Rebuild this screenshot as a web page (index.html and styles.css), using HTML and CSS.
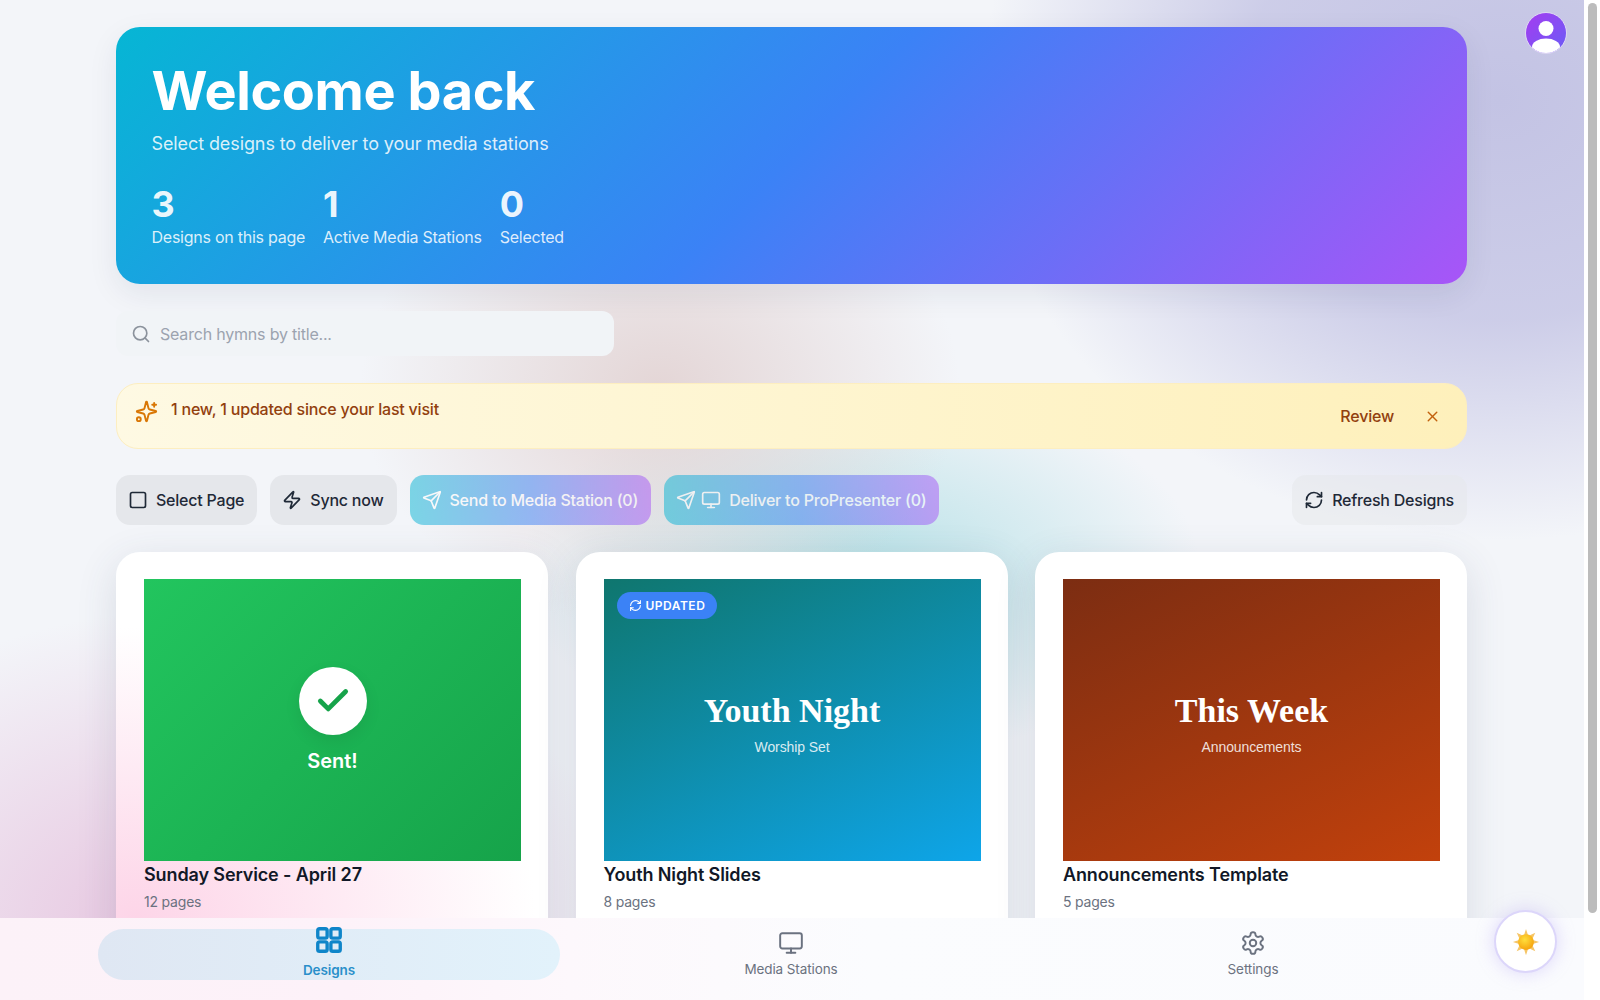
FILE: index.html
```html
<!DOCTYPE html>
<html lang="en">
<head>
    <meta charset="UTF-8">
    <meta name="viewport" content="width=device-width, initial-scale=1.0">
    <title>Designs</title>
    <link rel="stylesheet" href="styles.css">
</head>
<body>
    <main class="page">
        <section class="hero">
            <h1>Welcome back</h1>
            <p class="hero-sub">Select designs to deliver to your media stations</p>
            <div class="stats">
                <div class="stat"><strong>3</strong><span>Designs on this page</span></div>
                <div class="stat"><strong>1</strong><span>Active Media Stations</span></div>
                <div class="stat"><strong>0</strong><span>Selected</span></div>
            </div>
        </section>

        <div class="search">
            <svg class="icon" viewBox="0 0 24 24"><circle cx="11" cy="11" r="8"/><path d="m21 21-4.3-4.3"/></svg>
            <span>Search hymns by title...</span>
        </div>

        <div class="notice">
            <svg class="icon notice-icon" viewBox="0 0 24 24"><path d="M9.9 15.5A2 2 0 0 0 8.5 14.1L2.4 12.5a.5.5 0 0 1 0-1L8.5 9.9A2 2 0 0 0 9.9 8.5l1.6-6.1a.5.5 0 0 1 1 0l1.6 6.1a2 2 0 0 0 1.4 1.4l6.1 1.6a.5.5 0 0 1 0 1l-6.1 1.6a2 2 0 0 0-1.4 1.4l-1.6 6.1a.5.5 0 0 1-1 0z"/><path d="M20 3v4"/><path d="M22 5h-4"/><circle cx="4" cy="20" r="2"/></svg>
            <p>1 new, 1 updated since your last visit</p>
            <span class="notice-review">Review</span>
            <svg class="icon notice-close" viewBox="0 0 24 24"><path d="M18 6 6 18"/><path d="m6 6 12 12"/></svg>
        </div>

        <div class="toolbar">
            <button class="btn">
                <svg class="icon" viewBox="0 0 24 24"><rect x="3" y="3" width="18" height="18" rx="2"/></svg>
                Select Page
            </button>
            <button class="btn">
                <svg class="icon" viewBox="0 0 24 24"><path d="M4 14a1 1 0 0 1-.78-1.63l9.9-10.2a.5.5 0 0 1 .86.46l-1.92 6.02A1 1 0 0 0 13 10h7a1 1 0 0 1 .78 1.63l-9.9 10.2a.5.5 0 0 1-.86-.46l1.92-6.02A1 1 0 0 0 11 14z"/></svg>
                Sync now
            </button>
            <button class="btn btn-send">
                <svg class="icon" viewBox="0 0 24 24"><path d="M14.5 21.7a.5.5 0 0 0 .9 0l6.5-19a.5.5 0 0 0-.6-.6l-19 6.5a.5.5 0 0 0 0 .9l7.9 3.2a2 2 0 0 1 1.1 1.1z"/><path d="m21.9 2.1-10.9 10.9"/></svg>
                Send to Media Station (0)
            </button>
            <button class="btn btn-send">
                <svg class="icon" viewBox="0 0 24 24"><path d="M14.5 21.7a.5.5 0 0 0 .9 0l6.5-19a.5.5 0 0 0-.6-.6l-19 6.5a.5.5 0 0 0 0 .9l7.9 3.2a2 2 0 0 1 1.1 1.1z"/><path d="m21.9 2.1-10.9 10.9"/></svg>
                <svg class="icon btn-monitor" viewBox="0 0 24 24"><rect x="2" y="3" width="20" height="14" rx="2"/><path d="M8 21h8"/><path d="M12 17v4"/></svg>
                Deliver to ProPresenter (0)
            </button>
            <button class="btn btn-refresh">
                <svg class="icon" viewBox="0 0 24 24"><path d="M3 12a9 9 0 0 1 9-9 9.75 9.75 0 0 1 6.74 2.74L21 8"/><path d="M21 3v5h-5"/><path d="M21 12a9 9 0 0 1-9 9 9.75 9.75 0 0 1-6.74-2.74L3 16"/><path d="M8 16H3v5"/></svg>
                Refresh Designs
            </button>
        </div>

        <div class="cards">
            <article class="card card-sent">
                <div class="thumb thumb-sent">
                    <div class="sent-circle">
                        <svg class="icon" viewBox="0 0 24 24"><path d="M20 6 9 17l-5-5"/></svg>
                    </div>
                    <span class="sent-label">Sent!</span>
                </div>
                <h3>Sunday Service - April 27</h3>
                <p class="pages">12 pages</p>
            </article>
            <article class="card">
                <div class="thumb thumb-youth">
                    <span class="badge">
                        <svg class="icon" viewBox="0 0 24 24"><path d="M3 12a9 9 0 0 1 9-9 9.75 9.75 0 0 1 6.74 2.74L21 8"/><path d="M21 3v5h-5"/><path d="M21 12a9 9 0 0 1-9 9 9.75 9.75 0 0 1-6.74-2.74L3 16"/><path d="M8 16H3v5"/></svg>
                        UPDATED
                    </span>
                    <span class="thumb-title">Youth Night</span>
                    <span class="thumb-sub">Worship Set</span>
                </div>
                <h3>Youth Night Slides</h3>
                <p class="pages">8 pages</p>
            </article>
            <article class="card">
                <div class="thumb thumb-week">
                    <span class="thumb-title">This Week</span>
                    <span class="thumb-sub">Announcements</span>
                </div>
                <h3>Announcements Template</h3>
                <p class="pages">5 pages</p>
            </article>
        </div>
    </main>

    <a class="avatar">
        <svg viewBox="0 0 40 40"><circle cx="20" cy="15.5" r="7.5"/><ellipse cx="20" cy="34" rx="14" ry="8.5"/></svg>
    </a>

    <nav class="tabbar">
        <a class="tab active">
            <svg class="icon" viewBox="0 0 24 24"><rect x="3" y="3" width="7.5" height="7.5" rx="1.5"/><rect x="13.5" y="3" width="7.5" height="7.5" rx="1.5"/><rect x="3" y="13.5" width="7.5" height="7.5" rx="1.5"/><rect x="13.5" y="13.5" width="7.5" height="7.5" rx="1.5"/></svg>
            <span>Designs</span>
        </a>
        <a class="tab">
            <svg class="icon" viewBox="0 0 24 24"><rect x="2" y="3" width="20" height="14" rx="2"/><path d="M8 21h8"/><path d="M12 17v4"/></svg>
            <span>Media Stations</span>
        </a>
        <a class="tab">
            <svg class="icon" viewBox="0 0 24 24"><path d="M12.22 2h-.44a2 2 0 0 0-2 2v.18a2 2 0 0 1-1 1.73l-.43.25a2 2 0 0 1-2 0l-.15-.08a2 2 0 0 0-2.73.73l-.22.38a2 2 0 0 0 .73 2.73l.15.1a2 2 0 0 1 1 1.72v.51a2 2 0 0 1-1 1.74l-.15.09a2 2 0 0 0-.73 2.73l.22.38a2 2 0 0 0 2.73.73l.15-.08a2 2 0 0 1 2 0l.43.25a2 2 0 0 1 1 1.73V20a2 2 0 0 0 2 2h.44a2 2 0 0 0 2-2v-.18a2 2 0 0 1 1-1.73l.43-.25a2 2 0 0 1 2 0l.15.08a2 2 0 0 0 2.73-.73l.22-.39a2 2 0 0 0-.73-2.73l-.15-.08a2 2 0 0 1-1-1.74v-.5a2 2 0 0 1 1-1.74l.15-.09a2 2 0 0 0 .73-2.73l-.22-.38a2 2 0 0 0-2.73-.73l-.15.08a2 2 0 0 1-2 0l-.43-.25a2 2 0 0 1-1-1.73V4a2 2 0 0 0-2-2z"/><circle cx="12" cy="12" r="3"/></svg>
            <span>Settings</span>
        </a>
    </nav>

    <button class="theme">
        <svg viewBox="0 0 32 32">
            <defs>
                <radialGradient id="sunCore" cx="42%" cy="36%" r="70%">
                    <stop offset="0%" stop-color="#ffdf3c"/>
                    <stop offset="100%" stop-color="#f59f0a"/>
                </radialGradient>
            </defs>
            <g class="sun-rays">
                <path d="M16 1l2.6 8h-5.2z"/>
                <path d="M16 31l2.6-8h-5.2z"/>
                <path d="M1 16l8-2.6v5.2z"/>
                <path d="M31 16l-8-2.6v5.2z"/>
                <path d="M5.4 5.4l7.4 3.4-4 4z"/>
                <path d="M26.6 5.4l-3.4 7.4-4-4z"/>
                <path d="M5.4 26.6l3.4-7.4 4 4z"/>
                <path d="M26.6 26.6l-7.4-3.4 4-4z"/>
            </g>
            <circle cx="16" cy="16" r="9" fill="url(#sunCore)"/>
        </svg>
    </button>

    <div class="scrollbar"><div class="scrollbar-thumb"></div></div>
</body>
</html>
```

FILE: styles.css
```css
* {
    box-sizing: border-box;
}
html, body {
    height: 100%;
    overflow: hidden;
}
body {
    margin: 0;
    color: #111827;
    font-family: Inter, 'Noto Sans', sans-serif;
    letter-spacing: -0.2px;
    background-color: #f3f5f9;
    background-image:
        radial-gradient(520px 440px at 1500px 100px, #c3c3e4 0%, rgba(195,195,228,0.8) 50%, rgba(195,195,228,0) 100%),
        radial-gradient(440px 320px at 190px 930px, #e6c2de 0%, rgba(230,194,222,0) 100%),
        radial-gradient(300px 240px at 660px 390px, rgba(226,210,210,0.9) 0%, rgba(226,210,210,0) 100%),
        radial-gradient(340px 190px at 860px 570px, rgba(180,224,230,0.95) 0%, rgba(180,224,230,0) 100%);
    background-repeat: no-repeat;
}
.icon {
    width: 20px;
    height: 20px;
    fill: none;
    stroke: currentColor;
    stroke-width: 2;
    stroke-linecap: round;
    stroke-linejoin: round;
    flex-shrink: 0;
}
.page {
    width: 1584px;
    height: 100vh;
    overflow: hidden;
    padding: 27px 117px 0 116px;
}

.hero {
    height: 257px;
    padding: 30px 35.5px;
    border-radius: 24px;
    color: #fff;
    background: linear-gradient(135deg, #06b6d4 0%, #3b82f6 50%, #a855f7 100%);
    box-shadow: 0 10px 30px rgba(30,40,80,0.08);
}
.hero h1 {
    margin: 0;
    font-size: 54px;
    line-height: 68px;
    font-weight: 700;
    letter-spacing: -0.4px;
}
.hero-sub {
    margin: 5px 0 0 0;
    font-size: 18px;
    line-height: 28px;
    letter-spacing: -0.1px;
    color: rgba(255,255,255,0.85);
}
.stats {
    display: flex;
    gap: 18px;
    margin-top: 26px;
}
.stat strong {
    display: block;
    font-size: 36px;
    line-height: 40px;
    font-weight: 700;
    color: rgba(255,255,255,0.92);
}
.stat span {
    display: block;
    margin-top: 1px;
    font-size: 16px;
    line-height: 24px;
    letter-spacing: -0.25px;
    color: rgba(255,255,255,0.85);
}

.search {
    display: flex;
    align-items: center;
    gap: 9px;
    width: 498px;
    height: 45px;
    margin-top: 27px;
    padding: 0 15px;
    border-radius: 12px;
    background: #f1f4f7;
    color: #9ca3af;
    font-size: 16px;
}
.search .icon {
    color: #8b929c;
}

.notice {
    display: flex;
    align-items: center;
    height: 66px;
    margin-top: 27px;
    padding: 0 25px 0 18px;
    border-radius: 22px;
    border: 1px solid #fdeec0;
    background: linear-gradient(90deg, #fef9e3 0%, #fef5d0 50%, #fef0bb 100%);
    color: #92400e;
    font-size: 16px;
    font-weight: 500;
}
.notice-icon {
    width: 23px;
    height: 23px;
    color: #d97706;
    margin-top: -9px;
}
.notice p {
    flex: 1;
    margin: -14px 0 0 13px;
}
.notice-review {
    margin-right: 30px;
}
.notice-close {
    width: 17px;
    height: 17px;
    color: #c2610c;
}

.toolbar {
    display: flex;
    gap: 13px;
    margin-top: 26px;
}
.btn {
    display: flex;
    align-items: center;
    gap: 8px;
    height: 50px;
    padding: 0 13px 0 12px;
    border: none;
    border-radius: 14px;
    background: #e5e7eb;
    color: #1f2937;
    font-family: inherit;
    font-size: 16px;
    font-weight: 500;
    letter-spacing: -0.22px;
}
.btn-send {
    color: #fff;
    opacity: 0.5;
    background: linear-gradient(90deg, #06b6d4 0%, #3b82f6 50%, #a855f7 100%);
}
.btn-monitor {
    margin-left: -3px;
}
.btn-refresh {
    margin-left: auto;
    background: rgba(229,231,235,0.55);
}

.cards {
    display: grid;
    grid-template-columns: repeat(3, 1fr);
    gap: 27.5px;
    margin-top: 27px;
}
.card {
    height: 460px;
    padding: 27px 27px 0 28px;
    border-radius: 24px;
    background: #fff;
    box-shadow: 0 10px 40px rgba(60,70,100,0.14);
}
.card-sent {
    background: radial-gradient(400px 290px at 20px 365px, #fdd5e8 0%, #fff 100%);
}
.card h3 {
    margin: 1px 0 0 0;
    font-size: 18px;
    line-height: 26px;
    font-weight: 600;
    letter-spacing: -0.12px;
    color: #111827;
}
.card .pages {
    margin: 4px 0 0 0;
    font-size: 14px;
    line-height: 20px;
    letter-spacing: -0.2px;
    color: #6b7280;
}
.thumb {
    position: relative;
    display: flex;
    flex-direction: column;
    align-items: center;
    justify-content: center;
    height: 282px;
    color: #fff;
}
.thumb-sent {
    background: linear-gradient(135deg, #22c55e, #16a34a);
}
.thumb-youth {
    background: linear-gradient(155deg, #0f766e, #0ea5e9);
}
.thumb-week {
    background: linear-gradient(155deg, #7c2d12, #c2410c);
}
.thumb-title {
    font-family: 'Liberation Serif', serif;
    font-size: 34px;
    line-height: 38px;
    font-weight: 700;
    letter-spacing: 0;
    margin-top: 8px;
}
.thumb-sub {
    font-family: 'Liberation Sans', sans-serif;
    font-size: 14px;
    line-height: 20px;
    letter-spacing: -0.1px;
    margin-top: 7px;
    color: rgba(255,255,255,0.85);
}
.sent-circle {
    display: flex;
    align-items: center;
    justify-content: center;
    width: 68px;
    height: 68px;
    border-radius: 50%;
    background: #fff;
    color: #16a34a;
    box-shadow: 0 6px 16px rgba(0,0,0,0.08);
}
.sent-circle .icon {
    width: 38px;
    height: 38px;
    stroke-width: 3;
}
.sent-label {
    margin-top: 14px;
    font-size: 20px;
    line-height: 24px;
    font-weight: 600;
    letter-spacing: 0;
}
.badge {
    position: absolute;
    top: 13px;
    left: 13px;
    display: flex;
    align-items: center;
    gap: 4px;
    height: 27px;
    padding: 0 12px;
    border-radius: 14px;
    background: #3b82f6;
    font-size: 12px;
    font-weight: 600;
    letter-spacing: 0.5px;
}
.badge .icon {
    width: 13px;
    height: 13px;
}

.avatar {
    position: fixed;
    top: 12px;
    left: 1525px;
    width: 42px;
    height: 42px;
    border-radius: 50%;
    border: 1px solid #ddd6f3;
    overflow: hidden;
    background: linear-gradient(135deg, #a53cf0, #6a5cf6);
}
.avatar svg {
    display: block;
    width: 40px;
    height: 40px;
    fill: #fff;
}

.tabbar {
    position: fixed;
    left: 0;
    bottom: 0;
    width: 1584px;
    height: 82px;
    padding: 11px 100px 20px 98px;
    display: grid;
    grid-template-columns: repeat(3, 1fr);
    background: linear-gradient(90deg, #fcf2f8 0%, #fdf2f9 22%, #fdf8fc 36%, #fbfcfe 55%, #fafbfe 100%);
}
.tab {
    display: flex;
    flex-direction: column;
    align-items: center;
    color: #6b7280;
    font-size: 13.5px;
    line-height: 18px;
    letter-spacing: -0.1px;
    gap: 4px;
}
.tab .icon {
    width: 26px;
    height: 26px;
    margin-top: 1px;
    stroke-width: 1.8;
}
.tab.active {
    border-radius: 26px;
    color: #2a8fca;
    font-weight: 600;
    background: linear-gradient(90deg, #dfe7f3, #e2f2fb);
}
.tab.active .icon {
    width: 30px;
    height: 30px;
    margin-top: -4px;
    margin-bottom: 2px;
    color: #0f85c9;
    stroke-width: 2.7;
}

.theme {
    position: fixed;
    left: 1494px;
    top: 910px;
    width: 63px;
    height: 63px;
    padding: 0;
    display: flex;
    align-items: center;
    justify-content: center;
    border-radius: 50%;
    border: 2px solid #dcd6fa;
    background: #fff;
    box-shadow: 0 0 18px rgba(168,150,240,0.35);
}
.theme svg {
    width: 28px;
    height: 28px;
}
.sun-rays {
    fill: #f6c566;
}

.scrollbar {
    position: fixed;
    top: 0;
    right: 0;
    width: 16px;
    height: 100vh;
    padding: 3px 3px 0 4px;
    background: #fff;
}
.scrollbar-thumb {
    height: 910px;
    border-radius: 5px;
    background: #bcbcbc;
}
```
